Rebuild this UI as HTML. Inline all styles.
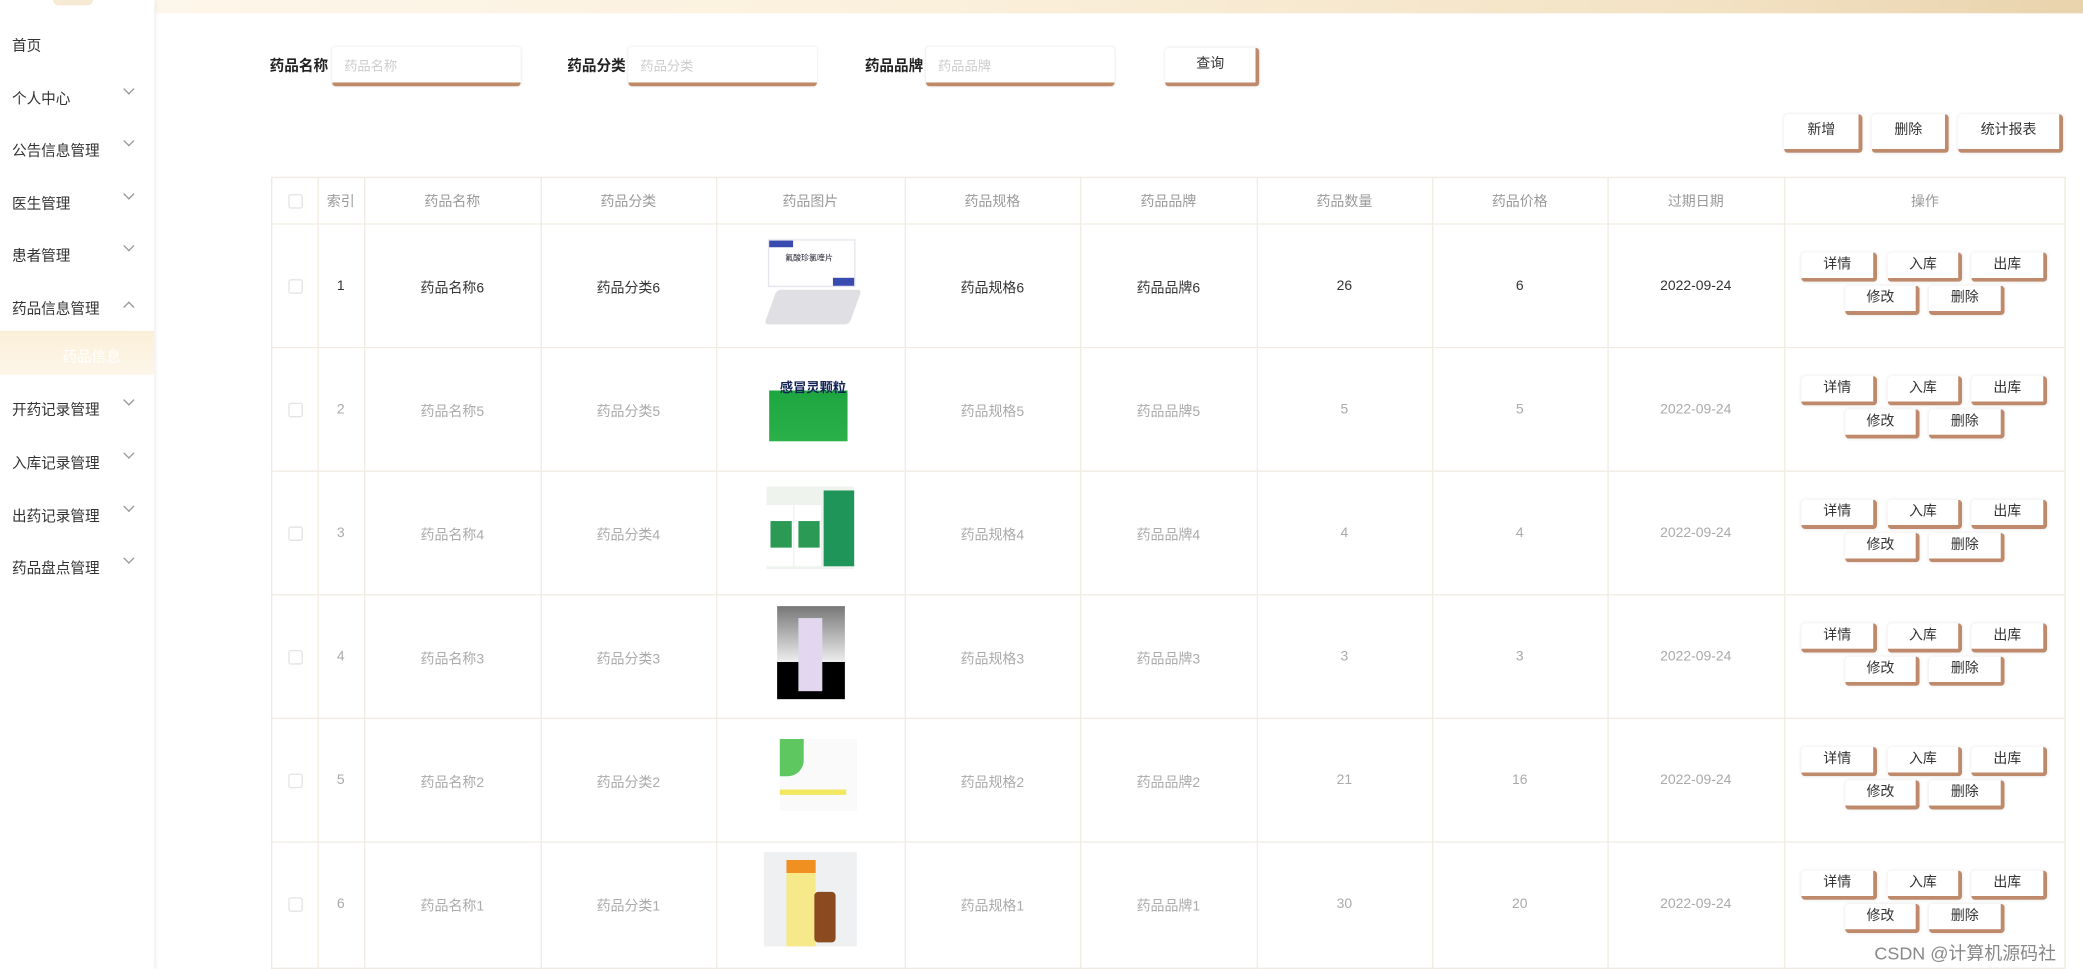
<!DOCTYPE html>
<html><head><meta charset="utf-8"><style>
html,body{margin:0;padding:0;width:2083px;height:969px;overflow:hidden;background:#fff}
#w{position:absolute;left:0;top:0;width:1568px;height:729px;transform:scale(1.32844,1.3292);transform-origin:0 0;font-family:"Liberation Sans","Noto Sans CJK SC",sans-serif;font-size:11px;color:#333}
.a{position:absolute}
.side{left:0;top:0;width:116px;height:729px;background:#fff;box-shadow:1px 0 3px rgba(0,0,0,.08)}
.mi{position:absolute;left:9px;font-size:11px;color:#333}
.ch{position:absolute;left:94px;width:5px;height:5px;border-right:1px solid #999;border-bottom:1px solid #999;transform:rotate(45deg)}
.top{left:117px;top:0;width:1451px;height:10px;background:linear-gradient(90deg,#fdf6ea,#fbf0dc 40%,#f3e2c4 80%,#e9d3ad)}
.lbl{font-weight:bold;font-size:11px;color:#222}
.inp{background:#fff;border-radius:3px;box-shadow:0 0 2px rgba(0,0,0,.12);border-bottom:3px solid #c08a67;box-sizing:border-box;color:#ccc;font-size:10px;padding:6px 9px}
.btn{position:absolute;background:#fff;box-sizing:border-box;border-right:3px solid #be8a6b;border-bottom:3px solid #be8a6b;border-radius:3px;box-shadow:0 0 3px rgba(0,0,0,.1);text-align:center;font-size:10.5px;color:#333}
.tb{left:204px;top:133px;width:1351px;height:596px;border:1px solid #f0ebe0;box-sizing:border-box}
.vl{position:absolute;top:133px;width:1px;height:596px;background:#f1ece3}
.hl{position:absolute;left:204px;width:1351px;height:1px;background:#f1ece3}
.c{position:absolute;text-align:center;font-size:10.5px}
.cb{position:absolute;left:217px;width:9px;height:9px;border:1px solid #e4e4e4;border-radius:2px}
</style></head><body><div id="w">
<div class="a top"></div>
<div class="a side"></div>
<div class="a" style="left:40px;top:0;width:30px;height:4px;background:#f6ead4;border-radius:0 0 6px 6px"></div>
<div class="mi" style="top:26px">首页</div>
<div class="mi" style="top:66px">个人中心</div><div class="ch" style="top:64px"></div>
<div class="mi" style="top:105px">公告信息管理</div><div class="ch" style="top:103px"></div>
<div class="mi" style="top:145px">医生管理</div><div class="ch" style="top:143px"></div>
<div class="mi" style="top:184px">患者管理</div><div class="ch" style="top:182px"></div>
<div class="mi" style="top:224px">药品信息管理</div><div class="ch" style="top:228px;transform:rotate(225deg)"></div>
<div class="a" style="left:0;top:249px;width:116px;height:33px;background:linear-gradient(180deg,#fbefd8,#fdf6e9)"></div>
<div class="mi" style="left:47px;top:260px;color:#fff">药品信息</div>
<div class="mi" style="top:300px">开药记录管理</div><div class="ch" style="top:298px"></div>
<div class="mi" style="top:340px">入库记录管理</div><div class="ch" style="top:338px"></div>
<div class="mi" style="top:380px">出药记录管理</div><div class="ch" style="top:378px"></div>
<div class="mi" style="top:419px">药品盘点管理</div><div class="ch" style="top:417px"></div>

<div class="a lbl" style="left:203px;top:41px">药品名称</div>
<div class="a inp" style="left:250px;top:35px;width:142px;height:30px">药品名称</div>
<div class="a lbl" style="left:427px;top:41px">药品分类</div>
<div class="a inp" style="left:473px;top:35px;width:142px;height:30px">药品分类</div>
<div class="a lbl" style="left:651px;top:41px">药品品牌</div>
<div class="a inp" style="left:697px;top:35px;width:142px;height:30px">药品品牌</div>
<div class="btn" style="left:877px;top:36px;width:71px;height:29px;line-height:24px">查询</div>
<div class="btn" style="left:1343px;top:86px;width:59px;height:29px;line-height:24px">新增</div>
<div class="btn" style="left:1409px;top:86px;width:58px;height:29px;line-height:24px">删除</div>
<div class="btn" style="left:1474px;top:86px;width:79px;height:29px;line-height:24px">统计报表</div>

<div class="a tb"></div>
<div class="vl" style="left:239px"></div><div class="vl" style="left:274px"></div><div class="vl" style="left:407px"></div><div class="vl" style="left:539px"></div><div class="vl" style="left:681px"></div><div class="vl" style="left:813px"></div><div class="vl" style="left:946px"></div><div class="vl" style="left:1078px"></div><div class="vl" style="left:1210px"></div><div class="vl" style="left:1343px"></div>
<div class="hl" style="top:168px"></div><div class="hl" style="top:261px"></div><div class="hl" style="top:354px"></div><div class="hl" style="top:447px"></div><div class="hl" style="top:540px"></div><div class="hl" style="top:633px"></div>

<div class="cb" style="top:146px"></div>
<div class="c" style="left:239px;width:35px;top:144px;color:#999">索引</div>
<div class="c" style="left:274px;width:133px;top:144px;color:#999">药品名称</div>
<div class="c" style="left:407px;width:132px;top:144px;color:#999">药品分类</div>
<div class="c" style="left:539px;width:142px;top:144px;color:#999">药品图片</div>
<div class="c" style="left:681px;width:132px;top:144px;color:#999">药品规格</div>
<div class="c" style="left:813px;width:133px;top:144px;color:#999">药品品牌</div>
<div class="c" style="left:946px;width:132px;top:144px;color:#999">药品数量</div>
<div class="c" style="left:1078px;width:132px;top:144px;color:#999">药品价格</div>
<div class="c" style="left:1210px;width:133px;top:144px;color:#999">过期日期</div>
<div class="c" style="left:1343px;width:212px;top:144px;color:#999">操作</div>

<div id="rows"></div>

<div class="a" style="left:578px;top:180px;width:66px;height:36px;background:#fff;border:1px solid #e5e5ee;box-sizing:border-box"><div class="a" style="left:0;top:0;width:18px;height:5px;background:#3a4bb0"></div><div class="a" style="right:0;bottom:0;width:16px;height:6px;background:#3a4bb0"></div><div class="a" style="left:12px;top:8px;font-size:6px;color:#223">氟酸珍氯喹片</div></div>
<div class="a" style="left:580px;top:218px;width:64px;height:26px;background:#e0e0e4;border-radius:3px;transform:skewX(-20deg)"></div>
<div class="a" style="left:579px;top:279px;width:59px;height:53px;background:linear-gradient(180deg,#fff 0 28%,#1da640 28%,#2bb04a)"><div class="a" style="left:8px;top:4px;font-size:10px;font-weight:bold;color:#125">感冒灵颗粒</div></div>
<div class="a" style="left:577px;top:366px;width:66px;height:62px;background:#eef3ee"><div class="a" style="left:0;top:14px;width:20px;height:46px;background:#fff"></div><div class="a" style="left:3px;top:26px;width:16px;height:20px;background:#2a9a55"></div><div class="a" style="left:21px;top:14px;width:20px;height:46px;background:#fff"></div><div class="a" style="left:24px;top:26px;width:16px;height:20px;background:#2a9a55"></div><div class="a" style="left:43px;top:3px;width:23px;height:57px;background:#20955a"></div></div>
<div class="a" style="left:585px;top:456px;width:51px;height:70px;background:linear-gradient(180deg,#777,#eee 60%,#000 60%)"><div class="a" style="left:16px;top:9px;width:18px;height:55px;background:#e2d7ee"></div></div>
<div class="a" style="left:587px;top:556px;width:58px;height:54px;background:#fafafa"><div class="a" style="left:0;top:0;width:18px;height:28px;background:#5fc75f;border-radius:0 0 12px 0"></div><div class="a" style="left:0;top:38px;width:50px;height:4px;background:#f2e860"></div></div>
<div class="a" style="left:575px;top:641px;width:70px;height:71px;background:#eef0f2"><div class="a" style="left:17px;top:6px;width:22px;height:65px;background:linear-gradient(180deg,#f09020 0 15%,#f5e98a 15%)"></div><div class="a" style="left:38px;top:30px;width:16px;height:38px;background:#8b4a20;border-radius:3px"></div></div>

<div class="a" style="left:1411px;top:706px;font-size:13.5px;color:#888">CSDN @计算机源码社</div>
</div>
<script>
var r=document.getElementById('rows'),h='';
var d=[[1,6,26,6],[2,5,5,5],[3,4,4,4],[4,3,3,3],[5,2,21,16],[6,1,30,20]];
var tops=[168,261,354,447,540,633];
for(var i=0;i<6;i++){var t=tops[i],m=t+40,col=i==0?'#333':'#aaa';
h+='<div class="cb" style="top:'+(m+2)+'px"></div>';
var cells=[[239,35,d[i][0]],[274,133,'药品名称'+d[i][1]],[407,132,'药品分类'+d[i][1]],[681,132,'药品规格'+d[i][1]],[813,133,'药品品牌'+d[i][1]],[946,132,d[i][2]],[1078,132,d[i][3]],[1210,133,'2022-09-24']];
cells.forEach(function(c){h+='<div class="c" style="left:'+c[0]+'px;width:'+c[1]+'px;top:'+(m+1)+'px;color:'+col+'">'+c[2]+'</div>';});
var b=t+22;
h+='<div class="btn" style="left:1356px;top:'+b+'px;width:57px;height:22px;line-height:19px">详情</div>';
h+='<div class="btn" style="left:1421px;top:'+b+'px;width:56px;height:22px;line-height:19px">入库</div>';
h+='<div class="btn" style="left:1484px;top:'+b+'px;width:57px;height:22px;line-height:19px">出库</div>';
h+='<div class="btn" style="left:1389px;top:'+(b+25)+'px;width:56px;height:22px;line-height:19px">修改</div>';
h+='<div class="btn" style="left:1452px;top:'+(b+25)+'px;width:57px;height:22px;line-height:19px">删除</div>';
}
r.innerHTML=h;
</script>
</body></html>
